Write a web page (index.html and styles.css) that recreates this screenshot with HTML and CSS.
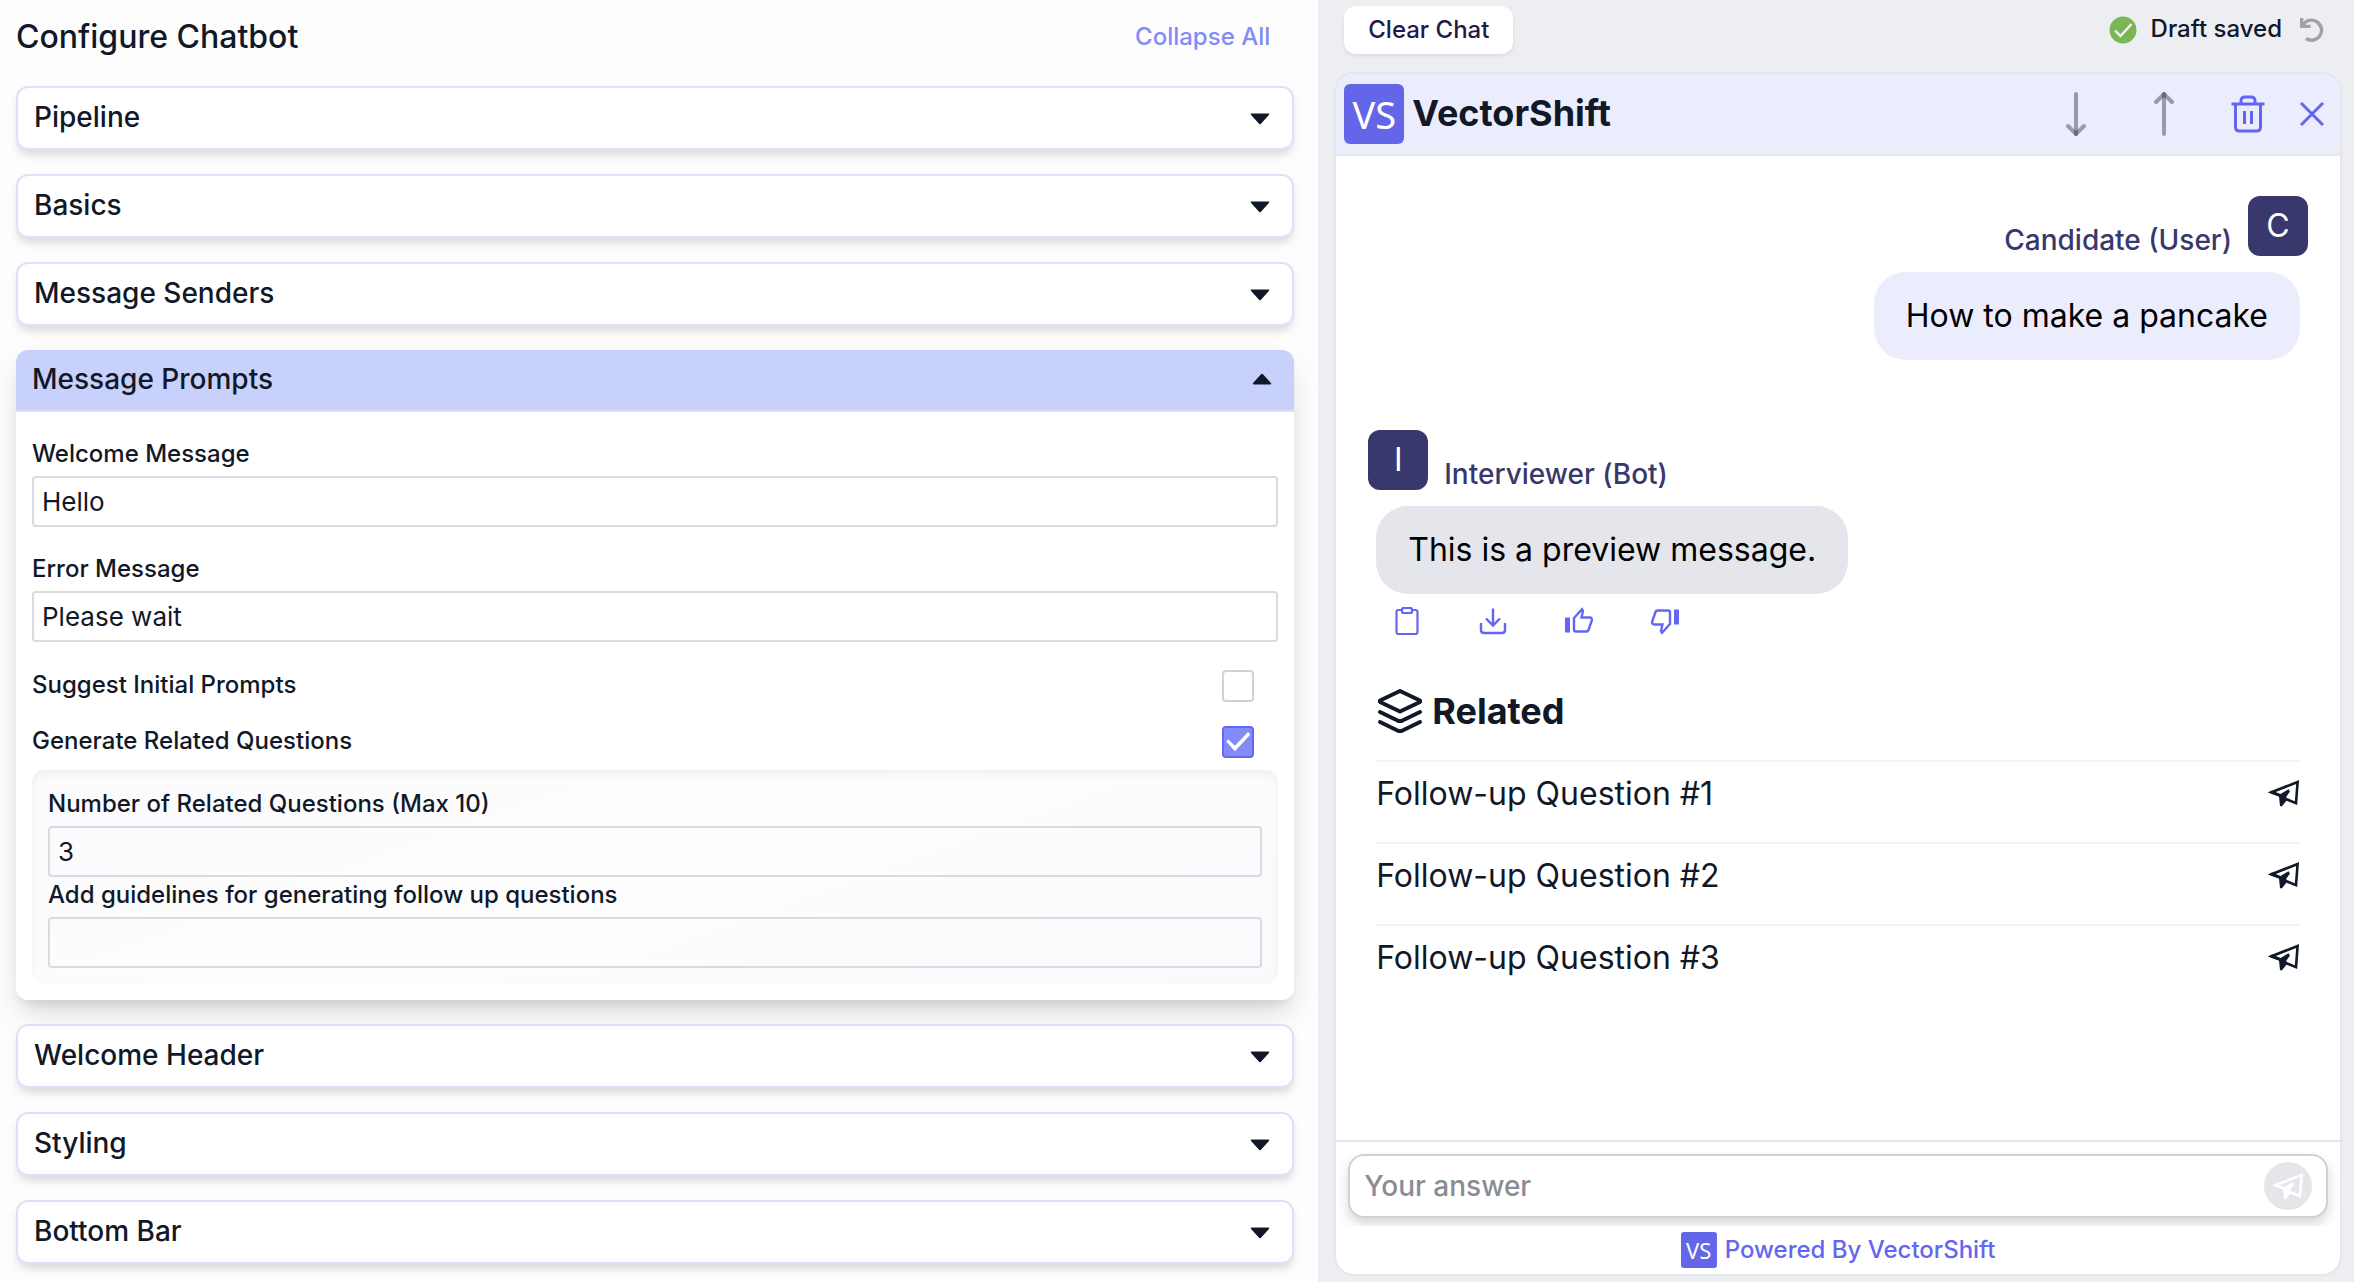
FILE: index.html
```html
<!DOCTYPE html>
<html lang="en">
<head>
<meta charset="utf-8">
<title>Configure Chatbot</title>
<link rel="stylesheet" href="styles.css">
</head>
<body>
<svg class="sprite" aria-hidden="true">
  <symbol id="caret" viewBox="0 0 20 12"><path d="M1.8 0.5H18.2Q19.8 0.5 18.9 1.9L11 10.8Q10 11.8 9 10.8L1.1 1.9Q0.2 0.5 1.8 0.5Z" fill="currentColor"/></symbol>
  <symbol id="plane" viewBox="0 0 32 28"><path d="M3.5 13.2L29.6 3L28 24.2L18 20M3.5 13.2L12 16.6" fill="none" stroke="currentColor" stroke-width="2.6"/><path d="M0 13.2L4 11.6L12.500 15L20.5 10.2L22 12.400L18.400 17.600L18.600 21.500L13.800 27.500L12 27L11 17.500L1 14Z" fill="currentColor"/></symbol>
</svg>
<div class="app">
  <main class="config">
    <header class="config-head">
      <h1 class="config-title">Configure Chatbot</h1>
      <button class="collapse-all" type="button">Collapse All</button>
    </header>
    <button class="section" type="button">Pipeline<svg class="caret"><use href="#caret"/></svg></button>
    <button class="section" type="button">Basics<svg class="caret"><use href="#caret"/></svg></button>
    <button class="section" type="button">Message Senders<svg class="caret"><use href="#caret"/></svg></button>
    <section class="open-section">
      <button class="open-head" type="button" aria-expanded="true">Message Prompts<svg class="caret caret-up"><use href="#caret"/></svg></button>
      <div class="open-body">
        <div class="field">
          <label class="label" for="welcome">Welcome Message</label>
          <input class="input" id="welcome" type="text" value="Hello">
        </div>
        <div class="field">
          <label class="label" for="error">Error Message</label>
          <input class="input" id="error" type="text" value="Please wait">
        </div>
        <div class="checks">
          <div class="check-row"><label for="suggest">Suggest Initial Prompts</label><input class="check" id="suggest" type="checkbox"></div>
          <div class="check-row"><label for="related">Generate Related Questions</label><input class="check" id="related" type="checkbox" checked></div>
        </div>
        <div class="subpanel">
          <label class="label" for="count">Number of Related Questions (Max 10)</label>
          <input class="input" id="count" type="text" value="3">
          <label class="label" for="guide">Add guidelines for generating follow up questions</label>
          <input class="input" id="guide" type="text">
        </div>
      </div>
    </section>
    <button class="section" type="button">Welcome Header<svg class="caret"><use href="#caret"/></svg></button>
    <button class="section" type="button">Styling<svg class="caret"><use href="#caret"/></svg></button>
    <button class="section" type="button">Bottom Bar<svg class="caret"><use href="#caret"/></svg></button>
  </main>

  <aside class="preview">
    <div class="toolbar">
      <button class="clear" type="button">Clear Chat</button>
      <div class="saved">
        <svg class="saved-icon" viewBox="0 0 28 28"><circle cx="14" cy="14" r="13.5" fill="#7ab655"/><path d="M6 14.5L11.5 20L22.5 8" fill="none" stroke="#f1f3f5" stroke-width="2.4"/></svg>
        <span>Draft saved</span>
        <button class="plain" type="button" aria-label="Undo"><svg class="undo-icon" viewBox="0 0 24 24"><path d="M3 7A10 10 0 1 1 6 20.5" fill="none" stroke="#a0a2a8" stroke-width="3.4"/><path d="M1.7 0V8.4H10.5" fill="none" stroke="#a0a2a8" stroke-width="3.4"/></svg></button>
      </div>
    </div>
    <div class="chat">
      <header class="chat-head">
        <span class="logo">VS</span>
        <h2 class="chat-title">VectorShift</h2>
        <div class="chat-actions">
          <button class="plain" type="button" aria-label="Scroll down"><svg class="arrow-icon" viewBox="0 0 20 44"><path d="M10 2V42" class="arrow"/><path d="M2 34L10 42L18 34" class="arrow"/></svg></button>
          <button class="plain" type="button" aria-label="Scroll up"><svg class="arrow-icon" viewBox="0 0 20 44"><path d="M10 2V42" class="arrow"/><path d="M2 10L10 2L18 10" class="arrow"/></svg></button>
          <button class="plain" type="button" aria-label="Delete"><svg class="trash-icon" viewBox="0 0 34 38" fill="none" stroke="#6366f1" stroke-width="3"><path d="M0.5 9H33.5M4.5 9V32Q4.5 36 8.5 36H25.5Q29.5 36 29.5 32V9M10 9V6Q10 2 14 2H20Q24 2 24 6V9M13.5 16V29M20.5 16V29"/></svg></button>
          <button class="plain" type="button" aria-label="Close"><svg class="close-icon" viewBox="0 0 24 24"><path d="M1 1L23 23M23 1L1 23" stroke="#6366f1" stroke-width="3"/></svg></button>
        </div>
      </header>
      <div class="messages">
        <div class="sender sender-user"><span>Candidate (User)</span><span class="avatar">C</span></div>
        <p class="bubble bubble-user">How to make a pancake</p>
        <div class="sender sender-bot"><span class="avatar">I</span><span>Interviewer (Bot)</span></div>
        <p class="bubble bubble-bot">This is a preview message.</p>
        <div class="feedback">
          <button class="plain" type="button" aria-label="Copy"><svg class="fb-icon" viewBox="0 0 28 28" fill="none" stroke="#6366f1" stroke-width="2.2"><rect x="3.5" y="3" width="21" height="24" rx="2"/><rect x="9" y="1" width="10" height="5" rx="1.5" fill="#fff"/></svg></button>
          <button class="plain" type="button" aria-label="Download"><svg class="fb-icon" viewBox="0 0 28 28" fill="none" stroke="#6366f1" stroke-width="2.4"><path d="M14 1.5V18M7 11.5L14 18.5L21 11.5M2 16V23Q2 26 5 26H23Q26 26 26 23V16"/></svg></button>
          <button class="plain" type="button" aria-label="Like"><svg class="fb-icon" viewBox="0 0 28 28" fill="none" stroke="#6366f1" stroke-width="2.4"><path d="M0 10.5H5V25.5H0Z" fill="#6366f1" stroke="none"/><path d="M9 11L17 2.2L18 4L16.5 10.5H25Q27 10.5 27 13L23.5 23Q23 24.5 21.5 24.5H11Q9 24.5 9 22.5Z"/></svg></button>
          <button class="plain" type="button" aria-label="Dislike"><svg class="fb-icon fb-down" viewBox="0 0 28 28" fill="none" stroke="#6366f1" stroke-width="2.4"><path d="M0 10.5H5V25.5H0Z" fill="#6366f1" stroke="none"/><path d="M9 11L17 2.2L18 4L16.5 10.5H25Q27 10.5 27 13L23.5 23Q23 24.5 21.5 24.5H11Q9 24.5 9 22.5Z"/></svg></button>
        </div>
        <h3 class="related-title"><svg class="layers-icon" viewBox="0 0 48 48" fill="none" stroke="#111827" stroke-width="4" stroke-linejoin="round" stroke-linecap="round"><path d="M24 4L44 13.5V15L24 24.5L4 15V13.5Z"/><path d="M4 25L22.500 34H25.500L44 25"/><path d="M4 35L22.500 44H25.500L44 35"/></svg>Related</h3>
        <ul class="questions">
          <li><button class="question" type="button">Follow-up Question #1<svg class="plane"><use href="#plane"/></svg></button></li>
          <li><button class="question" type="button">Follow-up Question #2<svg class="plane"><use href="#plane"/></svg></button></li>
          <li><button class="question" type="button">Follow-up Question #3<svg class="plane"><use href="#plane"/></svg></button></li>
        </ul>
      </div>
      <footer class="chat-foot">
        <div class="compose-wrap">
          <form class="compose">
            <input class="answer" type="text" placeholder="Your answer" aria-label="Your answer">
            <button class="send" type="button" aria-label="Send"><svg class="plane"><use href="#plane"/></svg></button>
          </form>
        </div>
        <a class="powered" href="#"><span class="logo logo-small">VS</span>Powered By VectorShift</a>
      </footer>
    </div>
  </aside>
</div>
</body>
</html>
```
FILE: styles.css
```css
*, *::before, *::after { box-sizing: border-box; }
body { margin: 0; font-family: Inter, "Liberation Sans", sans-serif; color: #111827; background: #fdfdfe; }
button, input { font: inherit; color: inherit; }
h1, h2, h3, p, ul { margin: 0; padding: 0; }
ul { list-style: none; }
svg { display: block; flex: none; }
.sprite { position: absolute; width: 0; height: 0; }
.plain { display: flex; padding: 0; border: 0; background: none; }

.app { display: grid; grid-template-columns: 56% 44%; min-height: 100vh; }

/* Left: configuration accordion */
.config { display: flex; flex-direction: column; gap: 24px; padding: 12px 24px 16px 16px; overflow: hidden; }
.config-head { display: flex; align-items: center; justify-content: space-between; height: 50px; padding-right: 24px; }
.config-title { font-size: 32px; font-weight: 500; line-height: 48px; }
.collapse-all { padding: 0 0 2px; border: 0; background: none; font-size: 24px; font-weight: 500; color: #818cf8; }
.section { display: flex; align-items: center; justify-content: space-between; height: 64px; padding: 0 22px 2px 16px; border: 2px solid #e0e0fb; border-radius: 12px; background: #fff; font-size: 28px; font-weight: 500; box-shadow: 0 6px 10px -2px rgba(0, 0, 0, .16); }
.caret { width: 20px; height: 12px; margin-top: 4px; }
.caret-up { margin-top: 0; transform: rotate(180deg); }
.open-section { border-radius: 12px; background: #fff; box-shadow: 0 16px 30px -4px rgba(0, 0, 0, .14), 0 8px 12px -6px rgba(0, 0, 0, .12); }
.open-head { display: flex; align-items: center; justify-content: space-between; width: 100%; height: 62px; padding: 0 22px 2px 16px; border: 0; border-bottom: 2px solid #dcdcfb; border-radius: 12px 12px 0 0; background: #c8d1fc; font-size: 28px; font-weight: 500; }
.open-body { padding: 24px 16px 16px; font-size: 24px; font-weight: 500; }
.field { margin-bottom: 24px; }
.label { display: block; height: 40px; line-height: 36px; }
.input { display: block; width: 100%; height: 51px; padding: 0 8px; border: 2px solid #dadbe0; border-radius: 4px; background: none; font-size: 26px; font-weight: 400; }
.checks { display: grid; gap: 24px; padding: 4px 24px 12px 0; }
.check-row { display: flex; align-items: center; justify-content: space-between; height: 32px; line-height: 30px; }
.check-row label { height: 32px; }
.check { appearance: none; display: grid; place-items: center; width: 32px; height: 32px; margin: 0; border: 2px solid #d1d1d9; border-radius: 4px; background: #fff; }
.check:checked { border-color: #6366f1; background: #818cf8; }
.check:checked::before { content: ""; width: 24px; height: 20px; background: #fff; clip-path: polygon(0 48%, 8% 36%, 36% 69%, 91% 0, 100% 14%, 36% 96%); }
.subpanel { padding: 16px; border-radius: 12px; background: linear-gradient(160deg, #fbfbfe, #fdfdfd 50%, #f9fafc); box-shadow: inset 0 4px 8px rgba(0, 0, 0, .05); }

/* Right: chat preview */
.preview { display: flex; flex-direction: column; padding: 6px 12px 6px 16px; background: #edeef2; }
.toolbar { display: flex; align-items: flex-start; justify-content: space-between; height: 66px; padding: 0 18px 0 10px; }
.clear { height: 48px; padding: 0 24px 2px; border: 0; border-radius: 12px; background: #fff; font-size: 24px; font-weight: 500; color: #1e1b4b; box-shadow: 0 2px 4px rgba(0, 0, 0, .08); }
.saved { display: flex; align-items: center; gap: 14px; height: 48px; font-size: 24px; font-weight: 500; line-height: 46px; }
.saved span { height: 48px; }
.saved-icon { width: 28px; height: 28px; }
.undo-icon { width: 24px; height: 24px; margin-left: 4px; }
.chat { flex: 1; display: flex; flex-direction: column; border: 2px solid #e5e6eb; border-radius: 20px; background: #fff; overflow: hidden; }
.chat-head { display: flex; align-items: center; height: 82px; padding: 0 16px 0 8px; border-bottom: 2px solid #e5e7eb; background: #ebedfd; }
.logo { display: grid; place-items: center; width: 60px; height: 60px; border-radius: 6px; background: #6366e8; color: #fff; font-family: "Noto Sans", sans-serif; font-size: 38px; font-weight: 400; line-height: 1; }
.chat-title { margin-left: 8px; padding-bottom: 2px; font-size: 36px; font-weight: 700; }
.chat-actions { display: flex; align-items: center; margin-left: auto; }
.arrow-icon { width: 20px; height: 44px; margin-right: 68px; }
.arrow { fill: none; stroke: #111827; stroke-opacity: .38; stroke-width: 4; stroke-linecap: round; }
.trash-icon { width: 34px; height: 38px; margin: 0 35px 0 -11px; }
.close-icon { width: 24px; height: 24px; }
.messages { flex: 1; display: flex; flex-direction: column; padding: 40px 40px 0; }
.sender { display: flex; gap: 16px; align-items: flex-end; height: 60px; font-size: 28px; font-weight: 500; line-height: 32px; color: #38386c; }
.sender-user { align-self: flex-end; margin-right: -8px; }
.sender-bot { align-self: flex-start; margin: 70px 0 0 -8px; }
.avatar { display: grid; place-items: center; width: 60px; height: 60px; border-radius: 12px; background: #38386c; color: #fff; font-size: 32px; font-weight: 400; }
.bubble { margin-top: 16px; padding: 20px 32px; border-radius: 32px; font-size: 32px; line-height: 48px; color: #000; }
.bubble-user { align-self: flex-end; background: #ebedfd; }
.bubble-bot { align-self: flex-start; background: #e5e6eb; }
.feedback { display: flex; gap: 58px; padding: 13px 0 0 17px; }
.fb-icon { width: 28px; height: 28px; }
.fb-down { transform: rotate(180deg); }
.related-title { display: flex; align-items: center; gap: 8px; margin: 51px 0 24px; font-size: 36px; font-weight: 700; line-height: 50px; }
.layers-icon { width: 48px; height: 48px; }
.question { display: flex; align-items: center; justify-content: space-between; width: 100%; height: 82px; padding: 0 0 18px; border: 0; border-top: 2px solid #f3f4f8; background: none; font-size: 32px; font-weight: 400; }
.plane { width: 32px; height: 28px; }
.chat-foot { border-top: 2px solid #e5e6eb; }
.compose-wrap { padding: 12px 12px 8px; overflow: hidden; }
.compose { display: flex; align-items: center; height: 64px; padding: 0 14px; border: 2px solid #d1d1d3; border-radius: 16px; background: #fff; box-shadow: 0 6px 12px rgba(0, 0, 0, .16); }
.answer { flex: 1; min-width: 0; padding: 0; border: 0; background: none; font-size: 28px; font-weight: 500; }
.answer::placeholder { color: #8a8c94; opacity: 1; }
.send { display: grid; place-items: center; width: 48px; height: 48px; padding: 0; border: 0; border-radius: 50%; background: #e5e6ea; color: #fff; }
.powered { display: flex; align-items: center; justify-content: center; gap: 8px; height: 48px; font-size: 24px; font-weight: 500; line-height: 46px; color: #6366f1; text-decoration: none; }
.logo-small { width: 36px; height: 36px; border-radius: 3px; font-size: 22px; line-height: 1; }
```
